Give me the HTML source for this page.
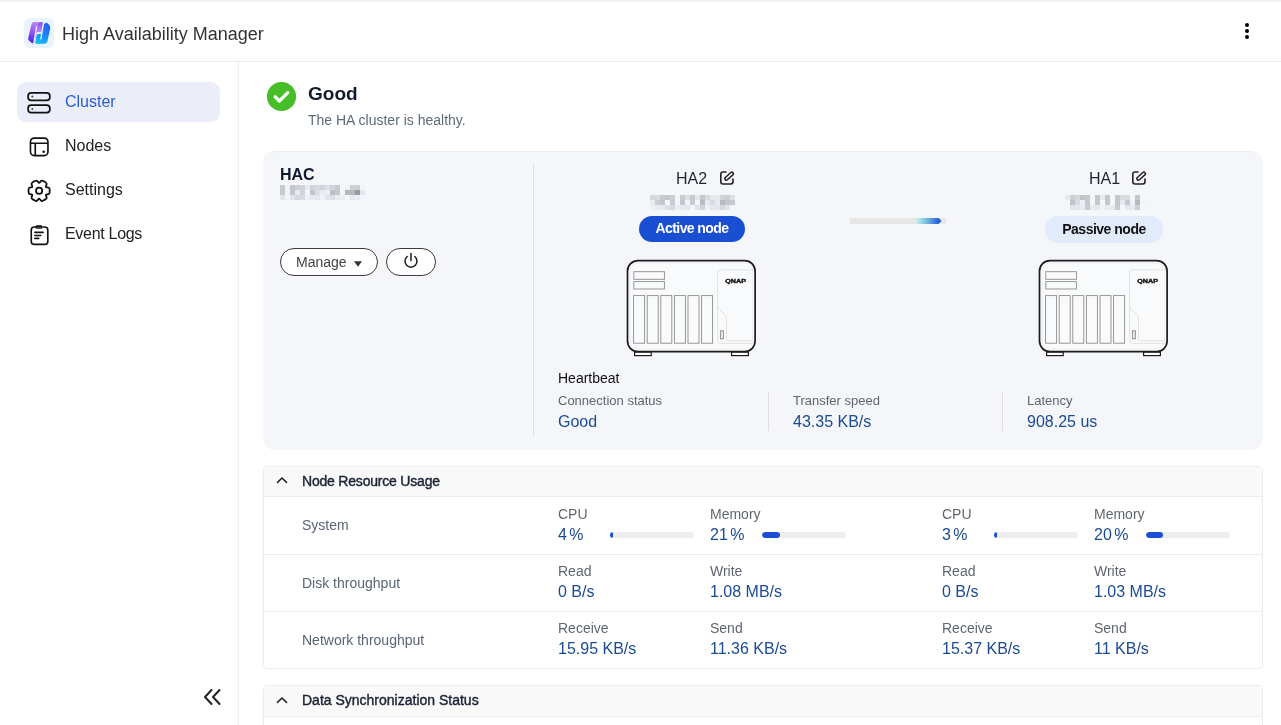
<!DOCTYPE html>
<html><head><meta charset="utf-8">
<style>
*{box-sizing:border-box;margin:0;padding:0}
html,body{width:1281px;height:725px;overflow:hidden;background:#fff;font-family:"Liberation Sans",sans-serif}
body{will-change:transform}
.a{position:absolute;white-space:nowrap}
#topstrip{position:absolute;left:0;top:0;width:1281px;height:2px;background:#f1f4f8}
#hdr{position:absolute;left:0;top:0;width:1281px;height:62px;border-bottom:1px solid #ececec}
#side{position:absolute;left:0;top:62px;width:239px;height:663px;border-right:1px solid #eeeeee}
.nav{position:absolute;left:17px;width:203px;height:40px;border-radius:9px}
.nav.on{background:#ebeef9}
.navt{position:absolute;left:65px;font-size:16px;color:#222}
.card{position:absolute;left:263px;top:151px;width:1000px;height:299px;background:#f4f6fa;border-radius:12px;border-top:1px solid #eceef2}
.lbl{font-size:13px;color:#60666f}
.lbl2{font-size:14px;color:#60666f}
.val{font-size:16px;color:#1b4a94}
.sec{position:absolute;left:263px;width:1000px;border:1px solid #ededee;border-radius:4px;background:#fff}
.sech{height:30px;background:#f9f9f9;border-bottom:1px solid #ededee;position:relative}
.row{position:relative;height:57px;border-bottom:1px solid #ededee}
.row:last-child{border-bottom:none;height:56px}
.bar{position:absolute;height:6px;border-radius:3px;background:#eeeeee;overflow:hidden}
.bar i{position:absolute;left:0;top:0;height:6px;border-radius:3px;background:#1a4fd6}
</style></head>
<body>
<div id="hdr"></div>
<div id="topstrip"></div>
<!-- logo -->
<div class="a" style="left:24px;top:18px;width:30px;height:30px;border-radius:6px;background:#e9f3fd"></div>
<svg class="a" style="left:24px;top:18px" width="30" height="30" viewBox="0 0 30 30">
<defs>
<linearGradient id="lg1" x1="0.3" y1="0" x2="0" y2="1"><stop offset="0" stop-color="#c084f4"/><stop offset="0.5" stop-color="#8a4ff0"/><stop offset="1" stop-color="#3f1ee6"/></linearGradient>
<linearGradient id="lg2" x1="0.6" y1="0" x2="0.2" y2="1"><stop offset="0" stop-color="#2a5df6"/><stop offset="0.55" stop-color="#1a8ef8"/><stop offset="1" stop-color="#10c6f2"/></linearGradient>
<linearGradient id="lg3" x1="0" y1="0" x2="0" y2="1"><stop offset="0" stop-color="#7a4af0"/><stop offset="1" stop-color="#c58cf6"/></linearGradient>
</defs>
<path d="M7.6 5.8 Q8.2 4 10.2 4 L18.2 4 Q19.8 4 19.5 5.8 L17.8 14.6 L12.8 14.6 L10.2 24.2 Q9.4 25.6 7.8 24.9 L5.2 22.8 Q4 21.8 4.2 20.2 Z" fill="url(#lg1)"/>
<path d="M13.2 8.2 Q14 4.5 17.5 4.3 Q19.5 4.3 19.3 6.2 L17.8 14.2 L12.6 14.2 Z" fill="url(#lg3)" opacity="0.85"/>
<path d="M21.8 4.9 Q23.4 4.6 24.8 6.4 L25.9 8.2 Q26.4 9.3 26.1 11 L23.6 22.4 Q23 25.6 19.8 25.8 L13.2 26 Q11 26.1 11.3 24 L12.5 17.8 Q12.9 15.8 15 15.8 L17.6 15.8 L19.9 6.6 Q20.3 5.2 21.8 4.9 Z" fill="url(#lg2)"/>
<g stroke="#e9f3fd" stroke-width="1.3" fill="none" stroke-linecap="round">
<path d="M12.6 8.6 L10 24.6"/>
<path d="M12.9 15 L17.4 15"/>
<path d="M19.5 4.6 L16.9 20.8"/>
</g>
</svg>
<div class="a" style="left:62px;top:24px;font-size:18px;color:#333">High Availability Manager</div>
<!-- kebab -->
<div class="a" style="left:1245px;top:23px;width:4px;height:4px;border-radius:2px;background:#000"></div>
<div class="a" style="left:1245px;top:29px;width:4px;height:4px;border-radius:2px;background:#000"></div>
<div class="a" style="left:1245px;top:35px;width:4px;height:4px;border-radius:2px;background:#000"></div>

<div id="side"></div>
<div class="nav on" style="top:82px"></div>
<svg class="a" style="left:26px;top:90px" width="26" height="26" viewBox="0 0 26 26" fill="none" stroke="#111" stroke-width="1.7">
<rect x="2.1" y="2.85" width="21.75" height="7.5" rx="3.2"/>
<rect x="2.1" y="15.15" width="21.75" height="7.5" rx="3.2"/>
<circle cx="6.3" cy="6.6" r="1" fill="#444" stroke="none"/>
<circle cx="6.3" cy="18.9" r="1" fill="#444" stroke="none"/>
</svg>
<div class="a navt" style="top:93px;color:#2b5bd6">Cluster</div>

<svg class="a" style="left:26px;top:134px" width="26" height="26" viewBox="0 0 26 26" fill="none" stroke="#111" stroke-width="1.65">
<rect x="4.45" y="4.05" width="17.5" height="17.5" rx="3.8"/>
<path d="M4.45 9.2 H21.95 M9.25 9.2 V21.55"/>
<circle cx="17.65" cy="17.65" r="1.25" fill="#111" stroke="none"/>
</svg>
<div class="a navt" style="top:137px">Nodes</div>

<svg class="a" style="left:26px;top:178px" width="26" height="26" viewBox="0 0 26 26" fill="none" stroke="#111" stroke-width="1.8">
<path id="gear" stroke-linejoin="round" d="M19.99 8.95 Q20.08 9.09 21.15 9.29 L22.59 9.56 Q23.67 9.77 23.67 11.59 L23.67 14.01 Q23.67 15.83 22.59 16.04 L21.15 16.31 Q20.08 16.51 19.99 16.65 L19.88 16.84 Q19.80 16.99 20.16 18.02 L20.65 19.40 Q21.01 20.44 19.44 21.35 L17.34 22.56 Q15.76 23.47 15.05 22.64 L14.09 21.53 Q13.38 20.70 13.21 20.70 L12.99 20.70 Q12.82 20.70 12.11 21.53 L11.15 22.64 Q10.44 23.47 8.86 22.56 L6.76 21.35 Q5.19 20.44 5.55 19.40 L6.04 18.02 Q6.40 16.99 6.32 16.84 L6.21 16.65 Q6.12 16.51 5.05 16.31 L3.61 16.04 Q2.53 15.83 2.53 14.01 L2.53 11.59 Q2.53 9.77 3.61 9.56 L5.05 9.29 Q6.12 9.09 6.21 8.95 L6.32 8.76 Q6.40 8.61 6.04 7.58 L5.55 6.20 Q5.19 5.16 6.76 4.25 L8.86 3.04 Q10.44 2.13 11.15 2.96 L12.11 4.07 Q12.82 4.90 12.99 4.90 L13.21 4.90 Q13.38 4.90 14.09 4.07 L15.05 2.96 Q15.76 2.13 17.34 3.04 L19.44 4.25 Q21.01 5.16 20.65 6.20 L20.16 7.58 Q19.80 8.61 19.88 8.76 Z"/>
<circle cx="13.1" cy="12.8" r="3.1"/>
</svg>
<div class="a navt" style="top:181px">Settings</div>

<svg class="a" style="left:26px;top:222px" width="26" height="26" viewBox="0 0 26 26" fill="none" stroke="#111" stroke-width="1.65" stroke-linecap="round">
<path d="M9.6 5 H8.2 Q5.25 5 5.25 8 V19.4 Q5.25 22.4 8.2 22.4 H18.8 Q21.8 22.4 21.8 19.4 V8 Q21.8 5 18.8 5 H17.4"/>
<rect x="10.05" y="4.05" width="5.9" height="1.9" rx="0.9" fill="#fff"/>
<path d="M8.9 10.4 H17.1 M8.9 13.5 H14.8 M8.9 16.4 H12.7"/>
</svg>
<div class="a navt" style="top:225px;letter-spacing:-0.3px">Event Logs</div>

<!-- collapse -->
<svg class="a" style="left:200px;top:686px" width="24" height="22" viewBox="0 0 24 22" fill="none" stroke="#222" stroke-width="2" stroke-linecap="round" stroke-linejoin="round">
<path d="M11.5 4 L5 11 L11.5 18 M19.5 4 L13 11 L19.5 18"/>
</svg>

<!-- status -->
<svg class="a" style="left:266px;top:81px" width="31" height="31" viewBox="0 0 31 31">
<circle cx="15.5" cy="15.5" r="14.6" fill="#45be28"/>
<path d="M9.2 15.8 L13.4 20 L21.8 11.6" fill="none" stroke="#fff" stroke-width="3.2" stroke-linecap="round" stroke-linejoin="round"/>
</svg>
<div class="a" style="left:308px;top:83px;font-size:19px;font-weight:bold;color:#101a2e">Good</div>
<div class="a" style="left:308px;top:112px;font-size:14px;color:#5f6b7a">The HA cluster is healthy.</div>

<!-- card -->
<div class="card"></div>
<div class="a" style="left:280px;top:166px;font-size:16px;font-weight:bold;color:#101a2e">HAC</div>
<div id="ip0" class="a" style="left:280px;top:185px"><svg width="85" height="15" shape-rendering="crispEdges"><rect x="0" y="0" width="5" height="5" fill="#c6c9ce"/><rect x="5" y="0" width="5" height="5" fill="#eef1f6"/><rect x="10" y="0" width="5" height="5" fill="#c2c5ca"/><rect x="15" y="0" width="5" height="5" fill="#cccfd4"/><rect x="20" y="0" width="5" height="5" fill="#d0d3d8"/><rect x="25" y="0" width="5" height="5" fill="#e8ebf0"/><rect x="30" y="0" width="5" height="5" fill="#d0d3d8"/><rect x="35" y="0" width="5" height="5" fill="#d6d9de"/><rect x="40" y="0" width="5" height="5" fill="#d0d3d8"/><rect x="45" y="0" width="5" height="5" fill="#dcdfe4"/><rect x="50" y="0" width="5" height="5" fill="#d0d3d8"/><rect x="55" y="0" width="5" height="5" fill="#c6c9ce"/><rect x="65" y="0" width="5" height="5" fill="#f0f3f8"/><rect x="70" y="0" width="5" height="5" fill="#cccfd4"/><rect x="75" y="0" width="5" height="5" fill="#cccfd4"/><rect x="80" y="0" width="5" height="5" fill="#f0f3f8"/><rect x="0" y="5" width="5" height="5" fill="#c6c9ce"/><rect x="5" y="5" width="5" height="5" fill="#f0f3f8"/><rect x="10" y="5" width="5" height="5" fill="#c2c5ca"/><rect x="15" y="5" width="5" height="5" fill="#e6e9ee"/><rect x="20" y="5" width="5" height="5" fill="#d0d3d8"/><rect x="30" y="5" width="5" height="5" fill="#c2c5ca"/><rect x="35" y="5" width="5" height="5" fill="#dcdfe4"/><rect x="40" y="5" width="5" height="5" fill="#e8ebf0"/><rect x="45" y="5" width="5" height="5" fill="#eaedf2"/><rect x="50" y="5" width="5" height="5" fill="#bcbfc4"/><rect x="55" y="5" width="5" height="5" fill="#c4c7cc"/><rect x="65" y="5" width="5" height="5" fill="#b4b7bc"/><rect x="70" y="5" width="5" height="5" fill="#b4b7bc"/><rect x="75" y="5" width="5" height="5" fill="#96999e"/><rect x="80" y="5" width="5" height="5" fill="#e4e7ec"/><rect x="0" y="10" width="5" height="5" fill="#e2e5ea"/><rect x="5" y="10" width="5" height="5" fill="#f0f3f8"/><rect x="10" y="10" width="5" height="5" fill="#e2e5ea"/><rect x="15" y="10" width="5" height="5" fill="#d4d7dc"/><rect x="20" y="10" width="5" height="5" fill="#d8dbe0"/><rect x="25" y="10" width="5" height="5" fill="#eceff4"/><rect x="30" y="10" width="5" height="5" fill="#e6e9ee"/><rect x="35" y="10" width="5" height="5" fill="#e4e7ec"/><rect x="40" y="10" width="5" height="5" fill="#f0f3f8"/><rect x="45" y="10" width="5" height="5" fill="#e0e3e8"/><rect x="50" y="10" width="5" height="5" fill="#dcdfe4"/><rect x="55" y="10" width="5" height="5" fill="#e8ebf0"/><rect x="60" y="10" width="5" height="5" fill="#eceff4"/><rect x="70" y="10" width="5" height="5" fill="#e4e7ec"/><rect x="75" y="10" width="5" height="5" fill="#e8ebf0"/><rect x="80" y="10" width="5" height="5" fill="#f2f5fa"/></svg></div>
<div class="a" style="left:280px;top:248px;width:98px;height:28px;border:1px solid #3a3a3a;border-radius:14px;background:#fff"></div>
<div class="a" style="left:296px;top:254px;font-size:14px;color:#444">Manage</div>
<svg class="a" style="left:353px;top:260px" width="10" height="8" viewBox="0 0 10 8"><path d="M1 1.2 H9 L5 6.8 Z" fill="#333"/></svg>
<div class="a" style="left:386px;top:248px;width:50px;height:28px;border:1px solid #3a3a3a;border-radius:14px;background:#fff"></div>
<svg class="a" style="left:402px;top:252px" width="18" height="18" viewBox="0 0 18 18" fill="none" stroke="#1a1a1a" stroke-width="1.5" stroke-linecap="round">
<path d="M9 1.5 V8.5"/><path d="M5.2 4.5 A6 6 0 1 0 12.8 4.5"/>
</svg>
<div class="a" style="left:533px;top:164px;width:1px;height:272px;background:#dedede"></div>

<!-- HA2 -->
<div class="a" style="left:676px;top:170px;font-size:16px;color:#1f2533">HA2</div>
<svg class="a" style="left:719px;top:170px" width="16" height="16" viewBox="0 0 16 16" fill="none" stroke="#222" stroke-width="1.6" stroke-linecap="round" stroke-linejoin="round">
<path d="M7 2 H4 Q1.8 2 1.8 4.2 V11.8 Q1.8 14 4 14 H11.8 Q14 14 14 11.8 V9"/>
<path d="M7.4 8.6 L12.8 3.7" stroke-width="4.6"/><path d="M7.4 8.6 L12.8 3.7" stroke="#f4f6fa" stroke-width="1.6"/>
</svg>
<div id="ip1" class="a" style="left:650px;top:195px"><svg width="85" height="15" shape-rendering="crispEdges"><rect x="0" y="0" width="5" height="5" fill="#d4d7dc"/><rect x="5" y="0" width="5" height="5" fill="#d8dbe0"/><rect x="10" y="0" width="5" height="5" fill="#c8cbd0"/><rect x="15" y="0" width="5" height="5" fill="#c4c7cc"/><rect x="20" y="0" width="5" height="5" fill="#cccfd4"/><rect x="25" y="0" width="5" height="5" fill="#f0f3f8"/><rect x="30" y="0" width="5" height="5" fill="#c8cbd0"/><rect x="35" y="0" width="5" height="5" fill="#dcdfe4"/><rect x="40" y="0" width="5" height="5" fill="#c8cbd0"/><rect x="45" y="0" width="5" height="5" fill="#e4e7ec"/><rect x="50" y="0" width="5" height="5" fill="#c4c7cc"/><rect x="55" y="0" width="5" height="5" fill="#d8dbe0"/><rect x="60" y="0" width="5" height="5" fill="#e6e9ee"/><rect x="65" y="0" width="5" height="5" fill="#e6e9ee"/><rect x="70" y="0" width="5" height="5" fill="#d0d3d8"/><rect x="75" y="0" width="5" height="5" fill="#cccfd4"/><rect x="80" y="0" width="5" height="5" fill="#dcdfe4"/><rect x="0" y="5" width="5" height="5" fill="#e8ebf0"/><rect x="5" y="5" width="5" height="5" fill="#cacdd2"/><rect x="10" y="5" width="5" height="5" fill="#c4c7cc"/><rect x="20" y="5" width="5" height="5" fill="#c8cbd0"/><rect x="30" y="5" width="5" height="5" fill="#c2c5ca"/><rect x="35" y="5" width="5" height="5" fill="#f0f3f8"/><rect x="40" y="5" width="5" height="5" fill="#c8cbd0"/><rect x="45" y="5" width="5" height="5" fill="#f2f5fa"/><rect x="50" y="5" width="5" height="5" fill="#b8bbc0"/><rect x="55" y="5" width="5" height="5" fill="#e6e9ee"/><rect x="60" y="5" width="5" height="5" fill="#d8dbe0"/><rect x="65" y="5" width="5" height="5" fill="#e6e9ee"/><rect x="70" y="5" width="5" height="5" fill="#b8bbc0"/><rect x="75" y="5" width="5" height="5" fill="#c4c7cc"/><rect x="80" y="5" width="5" height="5" fill="#c6c9ce"/><rect x="0" y="10" width="5" height="5" fill="#eef1f6"/><rect x="5" y="10" width="5" height="5" fill="#e8ebf0"/><rect x="10" y="10" width="5" height="5" fill="#e6e9ee"/><rect x="15" y="10" width="5" height="5" fill="#dcdfe4"/><rect x="20" y="10" width="5" height="5" fill="#d8dbe0"/><rect x="25" y="10" width="5" height="5" fill="#eaedf2"/><rect x="30" y="10" width="5" height="5" fill="#e6e9ee"/><rect x="35" y="10" width="5" height="5" fill="#e2e5ea"/><rect x="45" y="10" width="5" height="5" fill="#e0e3e8"/><rect x="50" y="10" width="5" height="5" fill="#d0d3d8"/><rect x="55" y="10" width="5" height="5" fill="#eef1f6"/><rect x="60" y="10" width="5" height="5" fill="#e4e7ec"/><rect x="65" y="10" width="5" height="5" fill="#e4e7ec"/><rect x="70" y="10" width="5" height="5" fill="#d4d7dc"/><rect x="75" y="10" width="5" height="5" fill="#e0e3e8"/><rect x="80" y="10" width="5" height="5" fill="#f2f5fa"/></svg></div>
<div class="a" style="left:639px;top:216px;width:106px;height:26px;border-radius:13px;background:#1a4fd3"></div>
<div class="a" style="left:639px;top:220px;width:106px;text-align:center;font-size:14px;font-weight:bold;color:#fff;letter-spacing:-0.6px">Active node</div>
<div id="nas1" class="a" style="left:620px;top:252px"><svg width="144" height="108" viewBox="0 0 144 108">
<rect x="7.5" y="8.6" width="127.6" height="91" rx="10.5" fill="#f9fafc" stroke="#1b1b1b" stroke-width="1.7"/>
<rect x="10" y="11" width="122.6" height="86" rx="8.5" fill="none" stroke="#ebebeb" stroke-width="0.8"/>
<rect x="14.6" y="100.2" width="16.6" height="3.4" fill="#fff" stroke="#1b1b1b" stroke-width="1.2"/>
<rect x="111.6" y="100.2" width="16.8" height="3.4" fill="#fff" stroke="#1b1b1b" stroke-width="1.2"/>
<g fill="none" stroke="#8c8c8c" stroke-width="0.9">
<rect x="13.8" y="19.7" width="30.6" height="7.6"/>
<rect x="13.8" y="29.6" width="30.6" height="7.4"/>
<rect x="13.6" y="43.6" width="11" height="47.6"/><rect x="27.2" y="43.6" width="11" height="47.6"/><rect x="40.8" y="43.6" width="11" height="47.6"/><rect x="54.4" y="43.6" width="11" height="47.6"/><rect x="68.0" y="43.6" width="11" height="47.6"/><rect x="81.6" y="43.6" width="11" height="47.6"/>
</g>
<g fill="none" stroke="#dcdcdc" stroke-width="0.8">
<path d="M133.5 17.8 H100.5 Q97.6 17.8 97.6 20.7 V88.5 Q97.6 91.4 100.5 91.4 H133.5"/>
<path d="M97.6 55 L106.5 64.8 V88.6 H133.5" stroke-dasharray="none"/>
</g>
<rect x="100.4" y="78.8" width="3" height="8" fill="#e6e6e6" stroke="#8c8c8c" stroke-width="0.9"/>
<text x="115.6" y="31.2" text-anchor="middle" font-family="Liberation Sans" font-weight="bold" font-size="5.2" fill="#111" stroke="#111" stroke-width="0.35" textLength="20.6" lengthAdjust="spacingAndGlyphs">QNAP</text>
</svg></div>

<!-- link bar -->
<div class="a" style="left:850px;top:218px;width:96px;height:6px;background:#e6e6e6"></div>
<svg class="a" style="left:916px;top:218px" width="26" height="6" viewBox="0 0 26 6">
<defs><linearGradient id="lgb" x1="0" x2="1"><stop offset="0" stop-color="#cdeee8"/><stop offset="0.35" stop-color="#80c8e0"/><stop offset="1" stop-color="#1646d6"/></linearGradient></defs>
<path d="M0 0 H22.5 L25.5 3 L22.5 6 H0 Z" fill="url(#lgb)"/>
</svg>

<!-- HA1 -->
<div class="a" style="left:1089px;top:170px;font-size:16px;color:#1f2533">HA1</div>
<svg class="a" style="left:1131px;top:170px" width="16" height="16" viewBox="0 0 16 16" fill="none" stroke="#222" stroke-width="1.6" stroke-linecap="round" stroke-linejoin="round">
<path d="M7 2 H4 Q1.8 2 1.8 4.2 V11.8 Q1.8 14 4 14 H11.8 Q14 14 14 11.8 V9"/>
<path d="M7.4 8.6 L12.8 3.7" stroke-width="4.6"/><path d="M7.4 8.6 L12.8 3.7" stroke="#f4f6fa" stroke-width="1.6"/>
</svg>
<div id="ip2" class="a" style="left:1065px;top:195px"><svg width="80" height="15" shape-rendering="crispEdges"><rect x="0" y="0" width="5" height="5" fill="#e6e9ee"/><rect x="5" y="0" width="5" height="5" fill="#cccfd4"/><rect x="10" y="0" width="5" height="5" fill="#d4d7dc"/><rect x="15" y="0" width="5" height="5" fill="#c0c3c8"/><rect x="20" y="0" width="5" height="5" fill="#c4c7cc"/><rect x="30" y="0" width="5" height="5" fill="#c4c7cc"/><rect x="35" y="0" width="5" height="5" fill="#e6e9ee"/><rect x="40" y="0" width="5" height="5" fill="#c4c7cc"/><rect x="50" y="0" width="5" height="5" fill="#c4c7cc"/><rect x="55" y="0" width="5" height="5" fill="#d8dbe0"/><rect x="60" y="0" width="5" height="5" fill="#d8dbe0"/><rect x="65" y="0" width="5" height="5" fill="#f2f5fa"/><rect x="70" y="0" width="5" height="5" fill="#c4c7cc"/><rect x="5" y="5" width="5" height="5" fill="#c0c3c8"/><rect x="10" y="5" width="5" height="5" fill="#d8dbe0"/><rect x="15" y="5" width="5" height="5" fill="#eceff4"/><rect x="20" y="5" width="5" height="5" fill="#c4c7cc"/><rect x="30" y="5" width="5" height="5" fill="#c4c7cc"/><rect x="40" y="5" width="5" height="5" fill="#c4c7cc"/><rect x="50" y="5" width="5" height="5" fill="#c4c7cc"/><rect x="55" y="5" width="5" height="5" fill="#e6e9ee"/><rect x="60" y="5" width="5" height="5" fill="#c4c7cc"/><rect x="65" y="5" width="5" height="5" fill="#eef1f6"/><rect x="70" y="5" width="5" height="5" fill="#b4b7bc"/><rect x="75" y="5" width="5" height="5" fill="#f0f3f8"/><rect x="5" y="10" width="5" height="5" fill="#e0e3e8"/><rect x="10" y="10" width="5" height="5" fill="#e2e5ea"/><rect x="15" y="10" width="5" height="5" fill="#e8ebf0"/><rect x="20" y="10" width="5" height="5" fill="#c8cbd0"/><rect x="25" y="10" width="5" height="5" fill="#e8ebf0"/><rect x="30" y="10" width="5" height="5" fill="#e4e7ec"/><rect x="35" y="10" width="5" height="5" fill="#f0f3f8"/><rect x="40" y="10" width="5" height="5" fill="#e6e9ee"/><rect x="45" y="10" width="5" height="5" fill="#e8ebf0"/><rect x="50" y="10" width="5" height="5" fill="#c8cbd0"/><rect x="60" y="10" width="5" height="5" fill="#e4e7ec"/><rect x="65" y="10" width="5" height="5" fill="#e6e9ee"/><rect x="70" y="10" width="5" height="5" fill="#cccfd4"/></svg></div>
<div class="a" style="left:1045px;top:216px;width:118px;height:27px;border-radius:13.5px;background:#e2ebfc"></div>
<div class="a" style="left:1045px;top:221px;width:118px;text-align:center;font-size:14px;font-weight:bold;color:#111;letter-spacing:-0.5px">Passive node</div>
<div id="nas2" class="a" style="left:1032px;top:252px"><svg width="144" height="108" viewBox="0 0 144 108">
<rect x="7.5" y="8.6" width="127.6" height="91" rx="10.5" fill="#f9fafc" stroke="#1b1b1b" stroke-width="1.7"/>
<rect x="10" y="11" width="122.6" height="86" rx="8.5" fill="none" stroke="#ebebeb" stroke-width="0.8"/>
<rect x="14.6" y="100.2" width="16.6" height="3.4" fill="#fff" stroke="#1b1b1b" stroke-width="1.2"/>
<rect x="111.6" y="100.2" width="16.8" height="3.4" fill="#fff" stroke="#1b1b1b" stroke-width="1.2"/>
<g fill="none" stroke="#8c8c8c" stroke-width="0.9">
<rect x="13.8" y="19.7" width="30.6" height="7.6"/>
<rect x="13.8" y="29.6" width="30.6" height="7.4"/>
<rect x="13.6" y="43.6" width="11" height="47.6"/><rect x="27.2" y="43.6" width="11" height="47.6"/><rect x="40.8" y="43.6" width="11" height="47.6"/><rect x="54.4" y="43.6" width="11" height="47.6"/><rect x="68.0" y="43.6" width="11" height="47.6"/><rect x="81.6" y="43.6" width="11" height="47.6"/>
</g>
<g fill="none" stroke="#dcdcdc" stroke-width="0.8">
<path d="M133.5 17.8 H100.5 Q97.6 17.8 97.6 20.7 V88.5 Q97.6 91.4 100.5 91.4 H133.5"/>
<path d="M97.6 55 L106.5 64.8 V88.6 H133.5" stroke-dasharray="none"/>
</g>
<rect x="100.4" y="78.8" width="3" height="8" fill="#e6e6e6" stroke="#8c8c8c" stroke-width="0.9"/>
<text x="115.6" y="31.2" text-anchor="middle" font-family="Liberation Sans" font-weight="bold" font-size="5.2" fill="#111" stroke="#111" stroke-width="0.35" textLength="20.6" lengthAdjust="spacingAndGlyphs">QNAP</text>
</svg></div>

<!-- heartbeat -->
<div class="a" style="left:558px;top:370px;font-size:14px;color:#111">Heartbeat</div>
<div class="a lbl" style="left:558px;top:393px">Connection status</div>
<div class="a val" style="left:558px;top:413px">Good</div>
<div class="a" style="left:768px;top:392px;width:1px;height:39px;background:#dedede"></div>
<div class="a lbl" style="left:793px;top:393px">Transfer speed</div>
<div class="a val" style="left:793px;top:413px">43.35 KB/s</div>
<div class="a" style="left:1002px;top:392px;width:1px;height:39px;background:#dedede"></div>
<div class="a lbl" style="left:1027px;top:393px">Latency</div>
<div class="a val" style="left:1027px;top:413px">908.25 us</div>

<!-- resource usage -->
<div class="sec" style="top:466px">
 <div class="sech">
  <svg class="a" style="left:11px;top:8px" width="14" height="10" viewBox="0 0 14 10" fill="none" stroke="#222" stroke-width="1.5" stroke-linecap="round"><path d="M2.5 7.4 L7 3 L11.5 7.4"/></svg>
  <div class="a" style="left:38px;top:6px;font-size:14px;color:#1a2233;-webkit-text-stroke:0.4px #1a2233;letter-spacing:-0.2px">Node Resource Usage</div>
 </div>
 <div class="row" style="height:58px">
  <div class="a" style="left:38px;top:20px;font-size:14px;color:#5a6475">System</div>
 </div>
 <div class="row">
  <div class="a" style="left:38px;top:20px;font-size:14px;color:#5a6475">Disk throughput</div>
 </div>
 <div class="row">
  <div class="a" style="left:38px;top:20px;font-size:14px;color:#5a6475">Network throughput</div>
 </div>
</div>
<div class="a lbl2" style="left:558px;top:506px">CPU</div>
<div class="a val" style="left:558px;top:526px;word-spacing:-2px">4 %</div>
<div class="a lbl2" style="left:710px;top:506px">Memory</div>
<div class="a val" style="left:710px;top:526px;word-spacing:-2px">21 %</div>
<div class="a lbl2" style="left:942px;top:506px">CPU</div>
<div class="a val" style="left:942px;top:526px;word-spacing:-2px">3 %</div>
<div class="a lbl2" style="left:1094px;top:506px">Memory</div>
<div class="a val" style="left:1094px;top:526px;word-spacing:-2px">20 %</div>
<div class="a lbl2" style="left:558px;top:563px">Read</div>
<div class="a val" style="left:558px;top:583px">0 B/s</div>
<div class="a lbl2" style="left:710px;top:563px">Write</div>
<div class="a val" style="left:710px;top:583px">1.08 MB/s</div>
<div class="a lbl2" style="left:942px;top:563px">Read</div>
<div class="a val" style="left:942px;top:583px">0 B/s</div>
<div class="a lbl2" style="left:1094px;top:563px">Write</div>
<div class="a val" style="left:1094px;top:583px">1.03 MB/s</div>
<div class="a lbl2" style="left:558px;top:620px">Receive</div>
<div class="a val" style="left:558px;top:640px">15.95 KB/s</div>
<div class="a lbl2" style="left:710px;top:620px">Send</div>
<div class="a val" style="left:710px;top:640px">11.36 KB/s</div>
<div class="a lbl2" style="left:942px;top:620px">Receive</div>
<div class="a val" style="left:942px;top:640px">15.37 KB/s</div>
<div class="a lbl2" style="left:1094px;top:620px">Send</div>
<div class="a val" style="left:1094px;top:640px">11 KB/s</div>
<div class="bar a" style="left:610px;top:532px;width:84px"><i style="width:3px"></i></div>
<div class="bar a" style="left:762px;top:532px;width:84px"><i style="width:18px"></i></div>
<div class="bar a" style="left:994px;top:532px;width:84px"><i style="width:3px"></i></div>
<div class="bar a" style="left:1146px;top:532px;width:84px"><i style="width:17px"></i></div>

<div class="sec" style="top:685px;height:60px">
 <div class="sech" style="height:31px">
  <svg class="a" style="left:11px;top:9px" width="14" height="10" viewBox="0 0 14 10" fill="none" stroke="#222" stroke-width="1.5" stroke-linecap="round"><path d="M2.5 7.4 L7 3 L11.5 7.4"/></svg>
  <div class="a" style="left:38px;top:6px;font-size:14px;color:#1a2233;-webkit-text-stroke:0.4px #1a2233">Data Synchronization Status</div>
 </div>
</div>
</body></html>
